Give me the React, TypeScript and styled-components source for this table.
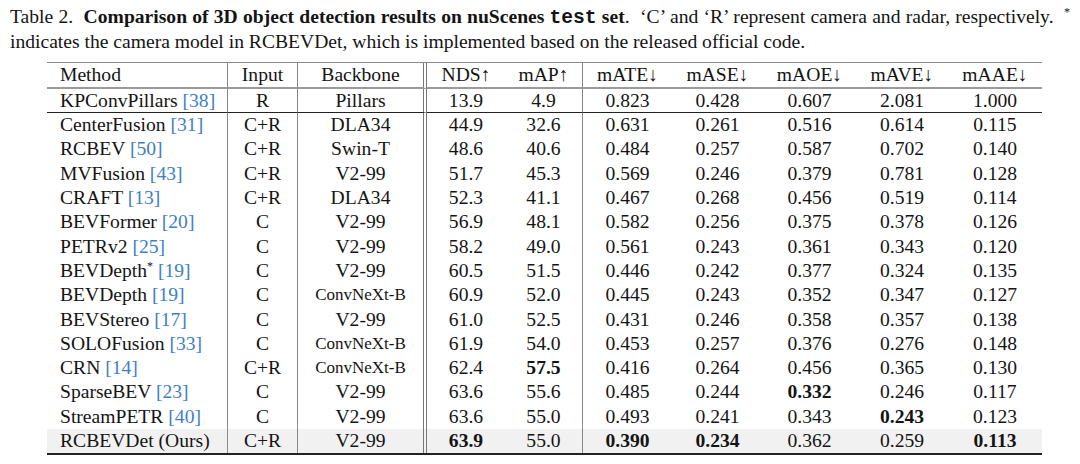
import React from "react";
import styled, { createGlobalStyle } from "styled-components";

type Cell = string | { v: string; bold?: boolean };

interface Row {
  method: string;
  cite?: string;
  star?: boolean;
  input: string;
  backbone: string;
  values: Cell[];
  ours?: boolean;
}

const rows: Row[] = [
  { method: "CenterFusion", cite: "31", input: "C+R", backbone: "DLA34", values: ["44.9", "32.6", "0.631", "0.261", "0.516", "0.614", "0.115"] },
  { method: "RCBEV", cite: "50", input: "C+R", backbone: "Swin-T", values: ["48.6", "40.6", "0.484", "0.257", "0.587", "0.702", "0.140"] },
  { method: "MVFusion", cite: "43", input: "C+R", backbone: "V2-99", values: ["51.7", "45.3", "0.569", "0.246", "0.379", "0.781", "0.128"] },
  { method: "CRAFT", cite: "13", input: "C+R", backbone: "DLA34", values: ["52.3", "41.1", "0.467", "0.268", "0.456", "0.519", "0.114"] },
  { method: "BEVFormer", cite: "20", input: "C", backbone: "V2-99", values: ["56.9", "48.1", "0.582", "0.256", "0.375", "0.378", "0.126"] },
  { method: "PETRv2", cite: "25", input: "C", backbone: "V2-99", values: ["58.2", "49.0", "0.561", "0.243", "0.361", "0.343", "0.120"] },
  { method: "BEVDepth", star: true, cite: "19", input: "C", backbone: "V2-99", values: ["60.5", "51.5", "0.446", "0.242", "0.377", "0.324", "0.135"] },
  { method: "BEVDepth", cite: "19", input: "C", backbone: "ConvNeXt-B", values: ["60.9", "52.0", "0.445", "0.243", "0.352", "0.347", "0.127"] },
  { method: "BEVStereo", cite: "17", input: "C", backbone: "V2-99", values: ["61.0", "52.5", "0.431", "0.246", "0.358", "0.357", "0.138"] },
  { method: "SOLOFusion", cite: "33", input: "C", backbone: "ConvNeXt-B", values: ["61.9", "54.0", "0.453", "0.257", "0.376", "0.276", "0.148"] },
  { method: "CRN", cite: "14", input: "C+R", backbone: "ConvNeXt-B", values: ["62.4", { v: "57.5", bold: true }, "0.416", "0.264", "0.456", "0.365", "0.130"] },
  { method: "SparseBEV", cite: "23", input: "C", backbone: "V2-99", values: ["63.6", "55.6", "0.485", "0.244", { v: "0.332", bold: true }, "0.246", "0.117"] },
  { method: "StreamPETR", cite: "40", input: "C", backbone: "V2-99", values: ["63.6", "55.0", "0.493", "0.241", "0.343", { v: "0.243", bold: true }, "0.123"] },
  {
    method: "RCBEVDet (Ours)", input: "C+R", backbone: "V2-99", ours: true,
    values: [{ v: "63.9", bold: true }, "55.0", { v: "0.390", bold: true }, { v: "0.234", bold: true }, "0.362", "0.259", { v: "0.113", bold: true }],
  },
];

const radarOnly: Row = {
  method: "KPConvPillars", cite: "38", input: "R", backbone: "Pillars",
  values: ["13.9", "4.9", "0.823", "0.428", "0.607", "2.081", "1.000"],
};

const metrics = [
  { name: "NDS", up: true, w: 78 },
  { name: "mAP", up: true, w: 78 },
  { name: "mATE", w: 89 },
  { name: "mASE", w: 91 },
  { name: "mAOE", w: 93 },
  { name: "mAVE", w: 92 },
  { name: "mAAE", w: 94 },
];

const GlobalStyle = createGlobalStyle`
  body {
    margin: 0;
    background: #ffffff;
    font-family: "Liberation Serif", "Times New Roman", serif;
    color: #141414;
  }
`;

const Page = styled.div`
  width: 1080px;
  height: 464px;
  overflow: hidden;
  padding-top: 5px;
  box-sizing: border-box;
`;

const Caption = styled.div`
  padding: 0 10px;
  font-size: 19.6px;
  line-height: 24px;
  margin-bottom: 8px;
`;

const CaptionLine = styled.div<{ $justify?: boolean }>`
  white-space: nowrap;
  text-align: ${(p) => (p.$justify ? "justify" : "left")};
  text-align-last: ${(p) => (p.$justify ? "justify" : "left")};
`;

const Mono = styled.span`
  font-family: "Liberation Mono", "Courier New", monospace;
  font-weight: 700;
`;

const Sup = styled.sup`
  font-size: 12px;
  line-height: 0;
  vertical-align: 7px;
`;

const Table = styled.table`
  margin-left: 47px;
  width: 995px;
  table-layout: fixed;
  border-collapse: separate;
  border-spacing: 0;
  font-size: 19.6px;
  border-top: 1px solid #8a8a8a;
  border-bottom: 2px solid #222;
`;

const HeadCell = styled.th<{ $w: number; $left?: boolean; $double?: boolean; $rule?: boolean }>`
  box-sizing: border-box;
  width: ${(p) => p.$w}px;
  height: 26px;
  padding: 0;
  padding-left: ${(p) => (p.$left ? "13px" : "0")};
  font-weight: 400;
  text-align: ${(p) => (p.$left ? "left" : "center")};
  white-space: nowrap;
  border-bottom: 2px solid #9a9a9a;
  border-right: ${(p) => (p.$double ? "4px double #777" : p.$rule ? "1px solid #888" : "none")};
`;

const BodyRow = styled.tr<{ $ours?: boolean; $split?: boolean }>`
  background: ${(p) => (p.$ours ? "#f1f1f1" : "transparent")};

  td {
    height: ${(p) => (p.$split ? "24px" : "24.3px")};
    border-bottom: ${(p) => (p.$split ? "1.5px solid #222" : "none")};
  }
`;

const Cell = styled.td<{ $left?: boolean; $double?: boolean; $rule?: boolean; $bold?: boolean; $small?: boolean }>`
  box-sizing: border-box;
  padding: 0;
  padding-left: ${(p) => (p.$left ? "13px" : "0")};
  text-align: ${(p) => (p.$left ? "left" : "center")};
  white-space: nowrap;
  line-height: 22px;
  font-weight: ${(p) => (p.$bold ? 700 : 400)};
  font-size: ${(p) => (p.$small ? "17px" : "inherit")};
  border-right: ${(p) => (p.$double ? "4px double #777" : p.$rule ? "1px solid #888" : "none")};
`;

const Cite = styled.span`
  color: #3d80c8;
`;

const Arrow = styled.span`
  font-family: "Liberation Serif", "DejaVu Serif", serif;
`;

const MethodName: React.FC<{ row: Row }> = ({ row }) => (
  <>
    {row.method}
    {row.star && <Sup>*</Sup>}
    {row.cite && (
      <>
        {" "}
        <Cite>[{row.cite}]</Cite>
      </>
    )}
  </>
);

const DataRow: React.FC<{ row: Row; split?: boolean }> = ({ row, split }) => (
  <BodyRow $ours={row.ours} $split={split}>
    <Cell $left $rule>
      <MethodName row={row} />
    </Cell>
    <Cell $rule>{row.input}</Cell>
    <Cell $double $small={row.backbone === "ConvNeXt-B"}>{row.backbone}</Cell>
    {row.values.map((c, i) => {
      const v = typeof c === "string" ? c : c.v;
      const bold = typeof c === "string" ? false : c.bold;
      return (
        <Cell key={i} $rule={i === 1} $bold={bold}>
          {v}
        </Cell>
      );
    })}
  </BodyRow>
);

export default function App() {
  return (
    <Page>
      <GlobalStyle />
      <Caption>
        <CaptionLine $justify>
          Table 2.&nbsp; <b>Comparison of 3D object detection results on nuScenes <Mono>test</Mono> set</b>.&nbsp; ‘C’ and ‘R’
          represent camera and radar, respectively.&nbsp; <Sup>*</Sup>
        </CaptionLine>
        <CaptionLine>
          indicates the camera model in RCBEVDet, which is implemented based on the released official code.
        </CaptionLine>
      </Caption>
      <Table>
        <thead>
          <tr>
            <HeadCell $w={181} $left $rule>Method</HeadCell>
            <HeadCell $w={70} $rule>Input</HeadCell>
            <HeadCell $w={129} $double>Backbone</HeadCell>
            {metrics.map((m, i) => (
              <HeadCell key={m.name} $w={m.w} $rule={i === 1}>
                {m.name}
                <Arrow>{m.up ? "↑" : "↓"}</Arrow>
              </HeadCell>
            ))}
          </tr>
        </thead>
        <tbody>
          <DataRow row={radarOnly} split />
          {rows.map((r, i) => (
            <DataRow key={i} row={r} />
          ))}
        </tbody>
      </Table>
    </Page>
  );
}
